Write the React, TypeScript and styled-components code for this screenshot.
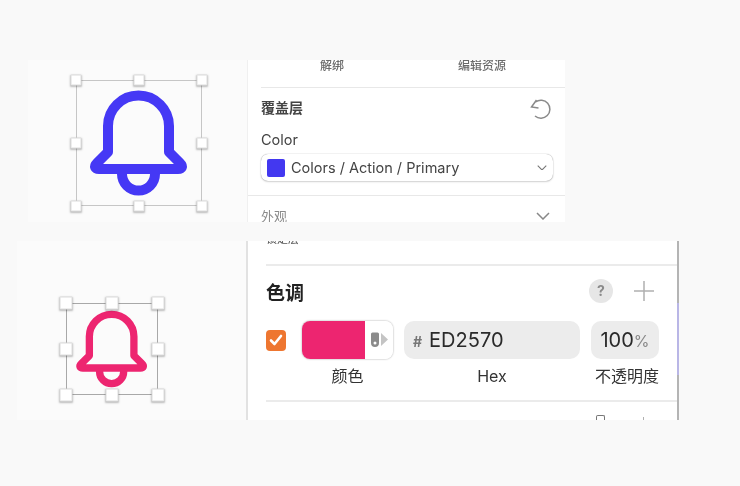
import React from 'react';
import styled, { createGlobalStyle } from 'styled-components';

const CJK = `Inter, "Noto Sans CJK SC", sans-serif`;

const GlobalStyle = createGlobalStyle`
    html, body {
        margin: 0;
        padding: 0;
        background: #f9f9f9;
        font-family: ${CJK};
    }
`;

const BELL = 'M32 46a30.5 30.5 0 0 1 61 0V72l11 11c3.5 3.5 2 6-2 6H23c-4 0-5.500-2.500-2-6L32 72Z';
const HANDLES = [
    [0, 0], [50, 0], [100, 0],
    [0, 50], [100, 50],
    [0, 100], [50, 100], [100, 100],
];

const Selection: React.FC<{ size: number; handle: number; color: string; line: string }> = ({ size, handle, color, line }) => (
    <Frame $size={size} $line={line}>
        <svg viewBox="0 0 126 126" width={size} height={size}>
            <path d={BELL} fill="none" stroke={color} strokeWidth="10" strokeLinejoin="round" />
            <path d="M46 90v4a16.500 16.500 0 0 0 33 0v-4" fill="none" stroke={color} strokeWidth="10" />
        </svg>
        {HANDLES.map(([x, y]) => <Handle key={`${x}-${y}`} $x={x} $y={y} $size={handle} />)}
    </Frame>
);

const Chevron: React.FC<{ width: number; color: string }> = ({ width, color }) => (
    <svg viewBox="0 0 14 8" width={width} fill="none" stroke={color} strokeWidth="1.5">
        <path d="M1 1l6 6 6-6" />
    </svg>
);

const App: React.FC = () => (
    <Page>
        <GlobalStyle />
        <TopShot>
            <TopCanvas>
                <Selection size={126} handle={11} color="#4538f5" line="#c6c6c6" />
            </TopCanvas>
            <TopPanel>
                <BindRow>
                    <span>解绑</span>
                    <span>编辑资源</span>
                </BindRow>
                <OverlaySection>
                    <OverlayHeader>
                        <h3>覆盖层</h3>
                        <svg viewBox="0 0 24 24" width="24" height="24" fill="none" stroke="#8a8a8a" strokeWidth="1.500">
                            <path d="M6.500 5a9 9 0 1 1-.5 14" />
                            <path d="M7.500 3L2.500 10l7 1" />
                        </svg>
                    </OverlayHeader>
                    <FieldLabel>Color</FieldLabel>
                    <Select>
                        <Swatch />
                        <span>Colors / Action / Primary</span>
                        <Chevron width={10} color="#777" />
                    </Select>
                </OverlaySection>
                <Collapsed>
                    <span>外观</span>
                    <Chevron width={14} color="#888" />
                </Collapsed>
            </TopPanel>
        </TopShot>
        <BottomShot>
            <BottomCanvas>
                <Selection size={92} handle={13} color="#ed2570" line="#a8a8a8" />
            </BottomCanvas>
            <BottomPanel>
                <ClippedRow><span>锁定层</span></ClippedRow>
                <TintSection>
                    <TintHeader>
                        <h3>色调</h3>
                        <HelpDot>?</HelpDot>
                        <svg viewBox="0 0 24 24" width="24" height="24" stroke="#b0b0b0" strokeWidth="1.500">
                            <path d="M12 2v20M2 12h20" />
                        </svg>
                    </TintHeader>
                    <TintGrid>
                        <Check>
                            <svg viewBox="0 0 20 20" width="20" height="20" fill="none" stroke="#fff" strokeWidth="2.600" strokeLinecap="round" strokeLinejoin="round">
                                <path d="M5 10.500l3.500 3.500 6.500-8" />
                            </svg>
                        </Check>
                        <ColorWell>
                            <ColorFill />
                            <PickerSlot>
                                <svg viewBox="0 0 18 16" width="18" height="16">
                                    <path d="M1 2a1.500 1.500 0 0 1 1.500-1.500h5A1.500 1.500 0 0 1 9 2v9a4 4 0 0 1-8 0Z" fill="#8b8b8b" />
                                    <circle cx="5" cy="11" r="1.500" fill="#fff" />
                                    <path d="M11 1l7 6.500-7 6.500Z" fill="#c4c4c4" />
                                </svg>
                            </PickerSlot>
                        </ColorWell>
                        <HexInput><i>#</i>ED2570</HexInput>
                        <OpacityInput>100<i>%</i></OpacityInput>
                        <CellLabel $column={2}>颜色</CellLabel>
                        <CellLabel $column={3}>Hex</CellLabel>
                        <CellLabel $column={4} $nudge={4}>不透明度</CellLabel>
                    </TintGrid>
                </TintSection>
                <NextRow>
                    <NextKnob />
                    <NextPlus />
                </NextRow>
            </BottomPanel>
        </BottomShot>
    </Page>
);

const Page = styled.div`
    width: 740px;
    height: 486px;
    padding-top: 60px;
    box-sizing: border-box;
    overflow: hidden;
`;

const TopShot = styled.div`
    display: flex;
    width: 537px;
    height: 162px;
    margin-left: 28px;
    overflow: hidden;
    filter: blur(0.4px);
`;

const BottomShot = styled.div`
    display: flex;
    width: 662px;
    height: 179px;
    margin: 19px 0 0 17px;
    overflow: hidden;
    filter: blur(0.25px);
`;

const TopCanvas = styled.div`
    width: 220px;
    padding: 20px 0 0 48px;
    box-sizing: border-box;
    background: #fbfbfb;
    border-right: 1px solid #f0f0f0;
    flex: none;
`;

const BottomCanvas = styled.div`
    width: 231px;
    padding: 62px 0 0 49px;
    box-sizing: border-box;
    background: #fbfbfb;
    border-right: 2px solid #e2e2e2;
    flex: none;
`;

const Frame = styled.div<{ $size: number; $line: string }>`
    position: relative;
    width: ${p => p.$size}px;
    height: ${p => p.$size}px;
    box-shadow: inset 0 0 0 1px ${p => p.$line};
    & > svg {
        display: block;
    }
`;

const Handle = styled.div<{ $x: number; $y: number; $size: number }>`
    position: absolute;
    left: ${p => p.$x}%;
    top: ${p => p.$y}%;
    width: ${p => p.$size}px;
    height: ${p => p.$size}px;
    transform: translate(-50%, -50%);
    box-sizing: border-box;
    background: #fff;
    border: 1px solid #dcdcdc;
    border-radius: 1px;
    box-shadow: 0 1px 2px rgba(0, 0, 0, 0.25);
`;

const TopPanel = styled.div`
    flex: 1;
    background: #fff;
    min-width: 0;
`;

const BindRow = styled.div`
    display: grid;
    grid-template-columns: 142px 158px;
    height: 27px;
    margin-left: 13px;
    border-bottom: 1px solid #e8e8e8;
    font-size: 12px;
    font-weight: 500;
    line-height: 12px;
    color: #6a6a6a;
    & > span {
        text-align: center;
    }
`;

const OverlaySection = styled.div`
    padding: 9px 12px 14px 13px;
    border-bottom: 1px solid #e8e8e8;
`;

const OverlayHeader = styled.div`
    display: flex;
    align-items: center;
    justify-content: space-between;
    height: 24px;
    & > h3 {
        margin: 0;
        padding-bottom: 4px;
        font-size: 14px;
        font-weight: 700;
        color: #444;
    }
`;

const FieldLabel = styled.div`
    margin-top: 9px;
    font-size: 14.5px;
    line-height: 20px;
    color: #444;
`;

const Select = styled.div`
    display: flex;
    align-items: center;
    height: 27px;
    margin-top: 4px;
    padding: 0 6px;
    box-sizing: border-box;
    border-radius: 7px;
    background: #fff;
    box-shadow: 0 0 1px rgba(0, 0, 0, 0.45), 0 1px 2px rgba(0, 0, 0, 0.15);
    font-size: 14.5px;
    color: #444;
    & > span {
        flex: 1;
        margin-left: 6px;
    }
`;

const Swatch = styled.div`
    width: 18px;
    height: 18px;
    border-radius: 2px;
    background: #4338f0;
`;

const Collapsed = styled.div`
    display: flex;
    align-items: center;
    justify-content: space-between;
    padding: 11px 15px 0 13px;
    font-size: 13px;
    line-height: 18px;
    color: #8a8a8a;
`;

const BottomPanel = styled.div`
    position: relative;
    flex: 1;
    min-width: 0;
    background: #fff;
    border-right: 2px solid #b4b4b4;
    padding-left: 18px;
    &::after {
        content: '';
        position: absolute;
        top: 62px;
        right: -2px;
        width: 2px;
        height: 72px;
        background: #b9b6e6;
    }
`;

const ClippedRow = styled.div`
    height: 4px;
    overflow: hidden;
    font-size: 11px;
    line-height: 4px;
    color: #555;
    & > span {
        display: block;
        margin-top: -4px;
    }
`;

const TintSection = styled.div`
    margin-top: 19px;
    border-top: 2px solid #ebebeb;
    border-bottom: 2px solid #ebebeb;
    height: 138px;
    box-sizing: border-box;
`;

const TintHeader = styled.div`
    display: flex;
    align-items: center;
    height: 24px;
    margin-top: 13px;
    padding-right: 21px;
    & > h3 {
        flex: 1;
        margin: 0;
        font-size: 19px;
        font-weight: 700;
        color: #222;
    }
    & > svg {
        margin-left: 19px;
    }
`;

const HelpDot = styled.div`
    width: 24px;
    height: 24px;
    border-radius: 50%;
    background: #e6e6e6;
    color: #8a8a8a;
    font-size: 14px;
    font-weight: 700;
    line-height: 24px;
    text-align: center;
`;

const TintGrid = styled.div`
    display: grid;
    grid-template-columns: 25px 91px 176px 68px;
    grid-template-rows: 38px auto;
    column-gap: 11px;
    margin-top: 18px;
    align-items: center;
`;

const Check = styled.div`
    width: 20px;
    height: 21px;
    border-radius: 4px;
    background: #ee7630;
    & > svg {
        display: block;
    }
`;

const ColorWell = styled.div`
    display: flex;
    height: 38px;
    border-radius: 8px;
    overflow: hidden;
    box-shadow: 0 0 2px rgba(0, 0, 0, 0.4);
`;

const ColorFill = styled.div`
    flex: 1;
    background: #ed2570;
`;

const PickerSlot = styled.div`
    display: flex;
    align-items: center;
    justify-content: center;
    width: 28px;
    background: #fff;
`;

const HexInput = styled.div`
    height: 38px;
    padding-left: 9px;
    box-sizing: border-box;
    border-radius: 10px;
    background: #ececec;
    font-size: 20px;
    line-height: 38px;
    color: #2a2a2a;
    & > i {
        font-style: normal;
        font-size: 14px;
        font-weight: 700;
        color: #777;
        margin-right: 7px;
    }
`;

const OpacityInput = styled.div`
    height: 38px;
    border-radius: 10px;
    background: #ececec;
    font-size: 20px;
    line-height: 38px;
    text-align: center;
    color: #2a2a2a;
    & > i {
        font-style: normal;
        font-size: 16px;
        color: #888;
    }
`;

const CellLabel = styled.div<{ $column: number; $nudge?: number }>`
    grid-column: ${p => p.$column};
    margin-top: 6px;
    margin-left: ${p => p.$nudge || 0}px;
    font-size: 16px;
    line-height: 22px;
    text-align: center;
    white-space: nowrap;
    color: #333;
`;

const NextRow = styled.div`
    display: flex;
    justify-content: flex-end;
    align-items: flex-end;
    gap: 38px;
    height: 18px;
    padding-right: 33px;
`;

const NextKnob = styled.div`
    width: 7px;
    height: 4px;
    border: 1px solid #777;
    border-bottom: none;
    border-radius: 2px 2px 0 0;
`;

const NextPlus = styled.div`
    width: 1px;
    height: 3px;
    background: #b0b0b0;
`;

export default App;
